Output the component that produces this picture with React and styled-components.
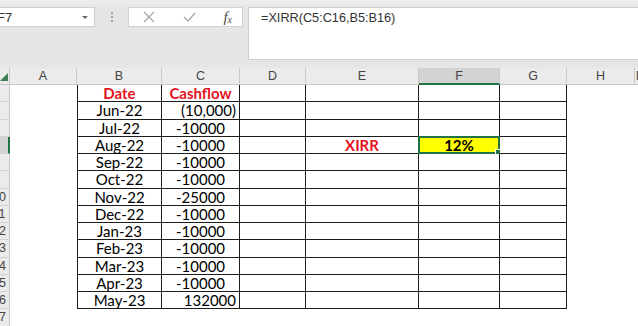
import React from 'react';
import styled, { createGlobalStyle } from 'styled-components';

const GlobalStyle = createGlobalStyle`
  html, body {
    margin: 0;
    padding: 0;
    overflow: hidden;
    background: #fff;
  }
`;

const COLS = ['A', 'B', 'C', 'D', 'E', 'F', 'G', 'H', 'I'];
const BOXED = ['B', 'C', 'D', 'E', 'F', 'G'];

const rows = [
  { n: 4, B: 'Date', C: 'Cashflow', head: true },
  { n: 5, B: 'Jun-22', C: '(10,000)', right: true },
  { n: 6, B: 'Jul-22', C: '-10000' },
  { n: 7, B: 'Aug-22', C: '-10000', E: 'XIRR', F: '12%' },
  { n: 8, B: 'Sep-22', C: '-10000' },
  { n: 9, B: 'Oct-22', C: '-10000' },
  { n: 10, B: 'Nov-22', C: '-25000' },
  { n: 11, B: 'Dec-22', C: '-10000' },
  { n: 12, B: 'Jan-23', C: '-10000' },
  { n: 13, B: 'Feb-23', C: '-10000' },
  { n: 14, B: 'Mar-23', C: '-10000' },
  { n: 15, B: 'Apr-23', C: '-10000' },
  { n: 16, B: 'May-23', C: '132000', right: true },
  { n: 17 },
];

export default function App() {
  return (
    <Page>
      <GlobalStyle />
      <Toolbar>
        <NameBox>
          <NameText>F7</NameText>
          <Caret />
        </NameBox>
        <Grip>
          <span />
          <span />
          <span />
        </Grip>
        <FuncBox>
          <svg width="12" height="12" viewBox="0 0 12 12">
            <path d="M1 1 L11 11 M11 1 L1 11" stroke="#a8a8a8" strokeWidth="1.3" fill="none" />
          </svg>
          <svg width="13" height="10" viewBox="0 0 13 10">
            <path d="M1 5 L5 9 L12 1" stroke="#a8a8a8" strokeWidth="1.3" fill="none" />
          </svg>
          <Fx>
            f<sub>x</sub>
          </Fx>
        </FuncBox>
        <FormulaBar>=XIRR(C5:C16,B5:B16)</FormulaBar>
      </Toolbar>

      <Sheet>
        <Corner>
          <svg width="8" height="8" viewBox="0 0 8 8">
            <path d="M8 0 L8 8 L0 8 Z" fill="#3f7d55" />
          </svg>
        </Corner>
        {COLS.map((c) => (
          <ColHead key={c} $active={c === 'F'}>
            {c}
          </ColHead>
        ))}

        {rows.map((r) => (
          <React.Fragment key={r.n}>
            {/* only the last digit of two-digit row numbers peeks into view */}
            <RowHead $active={r.n === 7}>
              {r.n >= 10 && <span>{r.n}</span>}
            </RowHead>
            {COLS.map((c) => {
              const boxed = r.n <= 16 && BOXED.includes(c);
              const isSel = r.n === 7 && c === 'F';
              return (
                <Cell
                  key={c}
                  $boxed={boxed}
                  $left={boxed && c === 'B'}
                  $align={c === 'C' && r.right ? 'right' : 'center'}
                  $bold={r.head || (r.n === 7 && (c === 'E' || c === 'F'))}
                  $red={r.head || (r.n === 7 && c === 'E')}
                  $fill={isSel ? '#ffff00' : undefined}
                >
                  {r[c]}
                  {isSel && (
                    <Selection>
                      <Handle />
                    </Selection>
                  )}
                </Cell>
              );
            })}
          </React.Fragment>
        ))}
      </Sheet>
    </Page>
  );
}

const Page = styled.div`
  width: 638px;
  height: 326px;
  overflow: hidden;
  background: #fff;
`;

const Toolbar = styled.div`
  height: 68px;
  box-sizing: border-box;
  background: #e6e6e6;
  border-top: 5px solid #ececec;
  padding-top: 2px;
  display: flex;
  align-items: flex-start;
`;

const NameBox = styled.div`
  width: 95px;
  height: 20px;
  box-sizing: border-box;
  background: #fff;
  border: 1px solid #cfcfcf;
  border-left: none;
  display: flex;
  align-items: center;
  justify-content: space-between;
  padding-right: 6px;
`;

const NameText = styled.span`
  margin-left: -3px;
  font-family: 'Liberation Sans', Arial, sans-serif;
  font-size: 13px;
  color: #333;
`;

const Caret = styled.span`
  width: 0;
  height: 0;
  border-left: 3.5px solid transparent;
  border-right: 3.5px solid transparent;
  border-top: 3.5px solid #6a6a6a;
`;

const Grip = styled.div`
  width: 33px;
  height: 20px;
  display: flex;
  flex-direction: column;
  align-items: center;
  justify-content: center;
  gap: 2px;

  span {
    width: 2px;
    height: 2px;
    background: #a0a0a0;
  }
`;

const FuncBox = styled.div`
  width: 115px;
  height: 20px;
  box-sizing: border-box;
  background: #fff;
  border: 1px solid #d2d2d2;
  display: flex;
  align-items: center;
  justify-content: space-between;
  padding: 0 10px 0 14px;
`;

const Fx = styled.span`
  font-family: 'Liberation Serif', 'Times New Roman', serif;
  font-style: italic;
  font-size: 15px;
  color: #4a4a4a;
  line-height: 1;

  sub {
    font-size: 10px;
    vertical-align: -1px;
  }
`;

const FormulaBar = styled.div`
  margin-left: 5px;
  flex: 1;
  height: 53px;
  box-sizing: border-box;
  background: #fff;
  border: 1px solid #cfcfcf;
  border-right: none;
  padding: 3px 0 0 12px;
  font-family: 'Liberation Sans', Arial, sans-serif;
  font-size: 12.7px;
  color: #333;
`;

const Sheet = styled.div`
  display: grid;
  grid-template-columns: 10px 67px 85px 78px 66px 113px 81px 67px 68px 1fr;
  grid-template-rows: 17px repeat(14, 17.25px);
`;

const Corner = styled.div`
  box-sizing: border-box;
  background: #ebebeb;
  border-right: 1px solid #c8c8c8;
  border-bottom: 1px solid #c8c8c8;
  display: flex;
  align-items: flex-end;
  padding-bottom: 3px;
`;

const ColHead = styled.div`
  box-sizing: border-box;
  background: ${(p) => (p.$active ? '#d3d3d3' : '#ebebeb')};
  border-right: 1px solid #c8c8c8;
  border-bottom: ${(p) => (p.$active ? '2px solid #217346' : '1px solid #c8c8c8')};
  display: flex;
  align-items: center;
  justify-content: center;
  font-family: 'Liberation Sans', Arial, sans-serif;
  font-size: 12.5px;
  color: #444;
`;

const RowHead = styled.div`
  box-sizing: border-box;
  overflow: hidden;
  background: ${(p) => (p.$active ? '#d3d3d3' : '#ebebeb')};
  border-right: ${(p) => (p.$active ? '2px solid #217346' : '1px solid #c8c8c8')};
  border-bottom: 1px solid #d2d2d2;
  display: flex;
  align-items: center;

  span {
    flex: none;
    width: 20px;
    margin-left: -11px;
    text-align: center;
    font-family: 'Liberation Sans', Arial, sans-serif;
    font-size: 12.5px;
    color: #444;
  }
`;

const Cell = styled.div`
  position: relative;
  box-sizing: border-box;
  display: flex;
  align-items: center;
  justify-content: ${(p) => (p.$align === 'right' ? 'flex-end' : 'center')};
  padding: 0 3px;
  white-space: nowrap;
  font-family: Lato, 'Liberation Sans', sans-serif;
  font-size: 15px;
  font-weight: ${(p) => (p.$bold ? 700 : 400)};
  color: ${(p) => (p.$red ? '#e3131e' : '#000')};
  background: ${(p) => p.$fill || '#fff'};
  border-right: ${(p) => (p.$boxed ? '1px solid #1c1c1c' : 'none')};
  border-bottom: ${(p) => (p.$boxed ? '1px solid #1c1c1c' : 'none')};
  border-left: ${(p) => (p.$left ? '1px solid #1c1c1c' : 'none')};
`;

const Selection = styled.div`
  position: absolute;
  inset: -1px -1px -1px -1px;
  border: 2px solid #217346;
  pointer-events: none;
`;

const Handle = styled.div`
  position: absolute;
  right: -4px;
  bottom: -4px;
  width: 5px;
  height: 5px;
  background: #217346;
  border: 1px solid #fff;
`;
